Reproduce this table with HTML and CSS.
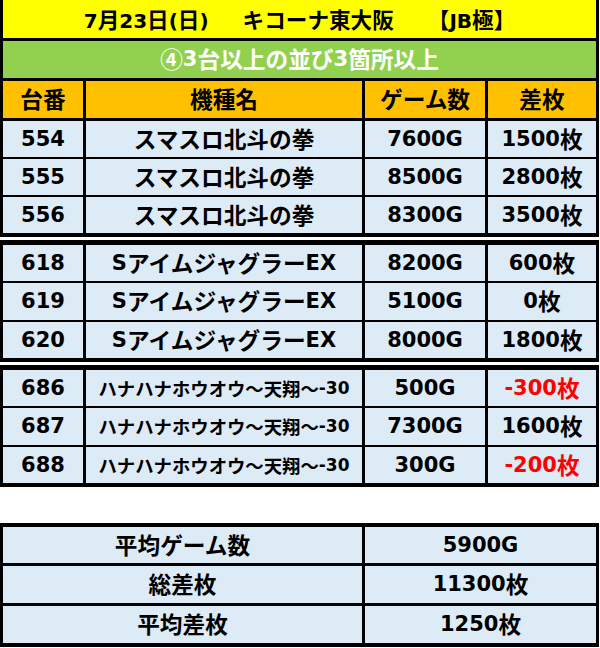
FILE: index.html
```html
<!DOCTYPE html>
<html lang="ja">
<head>
<meta charset="utf-8">
<title>7月23日 キコーナ東大阪</title>
<link rel="stylesheet" href="styles.css">
</head>
<body>
<div class="page">
  <section class="sheet first">
    <div class="banner title">
      <span>7<span class="jp">月</span>23<span class="jp">日</span>(<span class="jp">日</span>)</span>
      <span class="jp">キコーナ東大阪</span>
      <span><span class="jp">【</span>JB<span class="jp">極】</span></span>
    </div>
    <div class="banner sub"><span class="jp">④</span>3<span class="jp">台以上の並び</span>3<span class="jp">箇所以上</span></div>
    <div class="row head">
      <div class="cell jp">台番</div>
      <div class="cell jp">機種名</div>
      <div class="cell jp">ゲーム数</div>
      <div class="cell jp">差枚</div>
    </div>
    <div class="row">
      <div class="cell">554</div>
      <div class="cell jp">スマスロ北斗の拳</div>
      <div class="cell">7600G</div>
      <div class="cell">1500<span class="jp">枚</span></div>
    </div>
    <div class="row">
      <div class="cell">555</div>
      <div class="cell jp">スマスロ北斗の拳</div>
      <div class="cell">8500G</div>
      <div class="cell">2800<span class="jp">枚</span></div>
    </div>
    <div class="row">
      <div class="cell">556</div>
      <div class="cell jp">スマスロ北斗の拳</div>
      <div class="cell">8300G</div>
      <div class="cell">3500<span class="jp">枚</span></div>
    </div>
  </section>

  <section class="sheet group">
    <div class="row">
      <div class="cell">618</div>
      <div class="cell">S<span class="jp">アイムジャグラー</span>EX</div>
      <div class="cell">8200G</div>
      <div class="cell">600<span class="jp">枚</span></div>
    </div>
    <div class="row mid">
      <div class="cell">619</div>
      <div class="cell">S<span class="jp">アイムジャグラー</span>EX</div>
      <div class="cell">5100G</div>
      <div class="cell">0<span class="jp">枚</span></div>
    </div>
    <div class="row">
      <div class="cell">620</div>
      <div class="cell">S<span class="jp">アイムジャグラー</span>EX</div>
      <div class="cell">8000G</div>
      <div class="cell">1800<span class="jp">枚</span></div>
    </div>
  </section>

  <section class="sheet group">
    <div class="row">
      <div class="cell">686</div>
      <div class="cell small"><span class="jp">ハナハナホウオウ～天翔～</span>-30</div>
      <div class="cell">500G</div>
      <div class="cell neg">-300<span class="jp">枚</span></div>
    </div>
    <div class="row mid">
      <div class="cell">687</div>
      <div class="cell small"><span class="jp">ハナハナホウオウ～天翔～</span>-30</div>
      <div class="cell">7300G</div>
      <div class="cell">1600<span class="jp">枚</span></div>
    </div>
    <div class="row">
      <div class="cell">688</div>
      <div class="cell small"><span class="jp">ハナハナホウオウ～天翔～</span>-30</div>
      <div class="cell">300G</div>
      <div class="cell neg">-200<span class="jp">枚</span></div>
    </div>
  </section>

  <section class="sheet summary">
    <div class="srow">
      <div class="cell jp">平均ゲーム数</div>
      <div class="cell">5900G</div>
    </div>
    <div class="srow tall">
      <div class="cell jp">総差枚</div>
      <div class="cell">11300<span class="jp">枚</span></div>
    </div>
    <div class="srow tall">
      <div class="cell jp">平均差枚</div>
      <div class="cell">1250<span class="jp">枚</span></div>
    </div>
  </section>
</div>
</body>
</html>
```
FILE: styles.css
```css
body {
  margin: 0;
  background: #ffffff;
}

.page {
  width: 599px;
  font-family: "DejaVu Sans", "Noto Sans CJK JP", sans-serif;
  font-weight: 700;
  font-size: 21px;
  color: #000000;
  line-height: 1;
}

.jp {
  font-family: "Noto Sans CJK JP", sans-serif;
  font-size: 1.08em;
}

.sheet {
  background: #000000;
  display: flex;
  flex-direction: column;
  padding: 5px 3px 4px;
}

.sheet.first {
  padding-top: 0;
}

.sheet.group {
  margin-top: 3px;
}

.sheet.summary {
  margin-top: 36px;
  padding-top: 4px;
  gap: 3px;
}

.banner {
  display: flex;
  align-items: center;
  justify-content: center;
}

.title {
  height: 38px;
  background: #ffff00;
  font-size: 20px;
  gap: 34px;
}

.sub {
  height: 37px;
  margin-top: 3px;
  background: #92d050;
  color: #ffffff;
  font-size: 21px;
}

.row {
  display: grid;
  grid-template-columns: 80px 276px 120px 108px;
  column-gap: 3px;
  height: 36px;
}

.row + .row {
  margin-top: 2px;
}

.row.mid {
  height: 37px;
}

.row.head {
  height: 37px;
  margin-top: 3px;
}

.row.head + .row {
  margin-top: 3px;
}

.cell {
  background: #ddebf7;
  display: flex;
  align-items: center;
  justify-content: center;
  white-space: nowrap;
}

.head .cell {
  background: #ffc000;
}

.cell.small {
  font-size: 17px;
}

.neg {
  color: #ff0000;
}

.srow {
  display: grid;
  grid-template-columns: 359px 231px;
  column-gap: 3px;
  height: 36px;
}

.srow.tall {
  height: 37px;
}
```
